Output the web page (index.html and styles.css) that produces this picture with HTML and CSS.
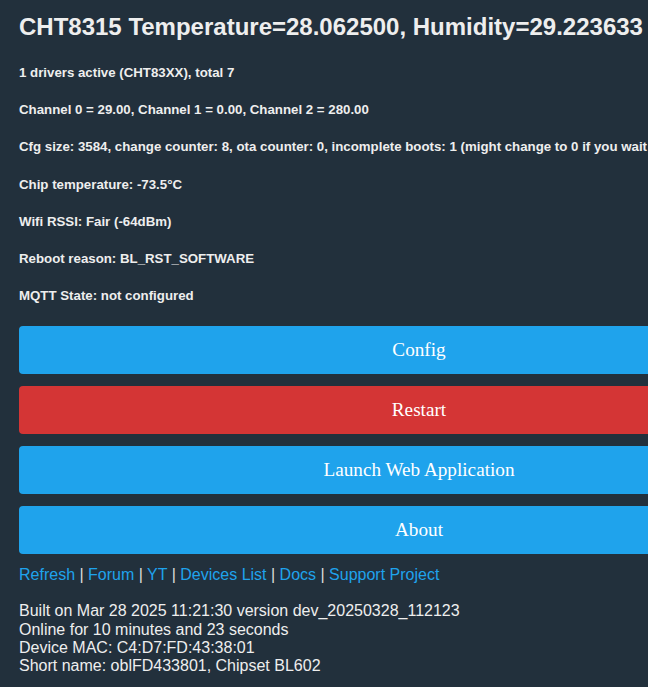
FILE: index.html
```html
<!DOCTYPE html>
<html>
<head>
<meta charset="utf-8">
<link rel="stylesheet" href="styles.css">
</head>
<body>
<div class="page">
  <h1 class="title">CHT8315 Temperature=28.062500, Humidity=29.223633</h1>
  <h5>1 drivers active (CHT83XX), total 7</h5>
  <h5>Channel 0 = 29.00, Channel 1 = 0.00, Channel 2 = 280.00</h5>
  <h5>Cfg size: 3584, change counter: 8, ota counter: 0, incomplete boots: 1 (might change to 0 if you wait to 30 sec)!</h5>
  <h5>Chip temperature: -73.5°C</h5>
  <h5>Wifi RSSI: Fair (-64dBm)</h5>
  <h5>Reboot reason: BL_RST_SOFTWARE</h5>
  <h5>MQTT State: not configured</h5>
  <div class="buttons">
    <button class="btn">Config</button>
    <button class="btn btn-red">Restart</button>
    <button class="btn">Launch Web Application</button>
    <button class="btn">About</button>
  </div>
  <div class="links">
    <a href="#">Refresh</a> | <a href="#">Forum</a> | <a href="#">YT</a> | <a href="#">Devices List</a> | <a href="#">Docs</a> | <a href="#">Support Project</a>
  </div>
  <div class="info">
    <div>Built on Mar 28 2025 11:21:30 version dev_20250328_112123</div>
    <div>Online for 10 minutes and 23 seconds</div>
    <div>Device MAC: C4:D7:FD:43:38:01</div>
    <div>Short name: oblFD433801, Chipset BL602</div>
  </div>
</div>
</body>
</html>
```
FILE: styles.css
```css
html {
  overflow: hidden;
}
body {
  margin: 0;
  background: #22303c;
  color: #eeeeee;
  font-family: "Liberation Sans", Arial, sans-serif;
  font-size: 16px;
}
.page {
  width: 800px;
  padding: 0 19px;
}
.title {
  font-size: 24px;
  font-weight: bold;
  margin: 13px 0 24px;
  white-space: nowrap;
}
h5 {
  font-size: 13.28px;
  font-weight: bold;
  margin: 22.2px 0;
  white-space: nowrap;
}
.buttons {
  display: flex;
  flex-direction: column;
  gap: 12px;
  margin-top: 23px;
}
.btn {
  display: block;
  width: 800px;
  height: 48px;
  border: 0;
  border-radius: 4px;
  background: #1fa3ec;
  color: #ffffff;
  font-family: "Liberation Serif", "Times New Roman", serif;
  font-size: 19.2px;
  padding: 0;
}
.btn-red {
  background: #d43535;
}
.links {
  margin-top: 12px;
  line-height: 18px;
  color: #dddddd;
}
.links a {
  color: #1fa3ec;
  text-decoration: none;
}
.info {
  margin-top: 18px;
  line-height: 18.4px;
}
```
